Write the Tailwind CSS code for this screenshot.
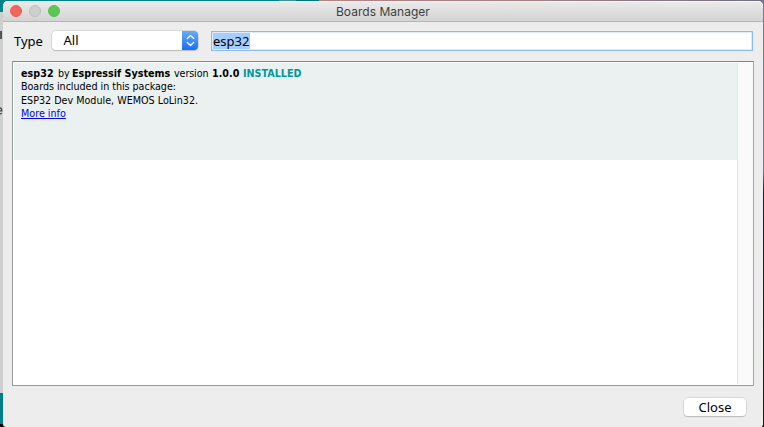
<!DOCTYPE html>
<html lang="en">
<head>
<meta charset="utf-8">
<title>Boards Manager</title>
<script src="https://cdn.jsdelivr.net/npm/@tailwindcss/browser@4"></script>
</head>
<body class="relative h-[427px] w-[764px] overflow-hidden bg-[#cfcfcf] pl-[3px] pt-px font-['Noto_Sans',sans-serif] text-black">
  <!-- Desktop behind the dialog -->
  <div class="absolute left-0 top-0 flex h-[12px] w-full">
    <div class="w-[279px] bg-[#00838a]"></div>
    <div class="w-[17px] bg-[#3a9196]"></div>
    <div class="w-[23px] bg-[#00767c]"></div>
    <div class="flex-1 bg-gradient-to-r from-[#b48380] via-[#a08086] to-[#716f83]"></div>
  </div>
  <div class="absolute right-0 top-0 h-full w-[2px] bg-gradient-to-b from-[#77768a] from-40% via-[#20202c] via-45% to-[#241a14]"></div>
  <div class="absolute left-0 top-[31px] h-[8px] w-[2px] bg-[#4d5759]"></div>
  <svg class="absolute left-0 top-[107px] h-[8px] w-[3px]" viewBox="0 0 3 8" fill="none" stroke="#444" stroke-width="1.2"><path d="M0 .8C1.2 1 1.8 2.2 1.8 3.8H0M0 7 1.8 6.4"/></svg>
  <div class="absolute left-0 top-[393px] h-[31px] w-[4px] bg-[#008085]"></div>
  <div class="absolute left-0 top-[424px] h-[3px] w-[8px] bg-black"></div>

  <div class="relative flex h-[426px] w-[760px] flex-col rounded-t-[5px] rounded-b-[3px] bg-[#ededed]">
    <header class="relative h-[21px] shrink-0 rounded-t-[5px] border-b border-[#b5b5b5] bg-gradient-to-b from-[#ebebeb] to-[#d3d3d3] shadow-[inset_0_1px_0_#f6f6f6]">
      <div class="flex gap-[7px] pl-[7px] pt-[4px]">
        <span class="size-[12px] rounded-full border border-[#e96057] bg-[#f3655b]"></span>
        <span class="size-[12px] rounded-full border border-[#bdbdbd] bg-[#cecece]"></span>
        <span class="size-[12px] rounded-full border border-[#55bf4d] bg-[#5ac752]"></span>
      </div>
      <h1 class="absolute left-[333px] top-[2px] whitespace-nowrap font-['Inter',sans-serif] text-[12px] leading-[18px] tracking-[0.02px] text-[#3f3f3f]">Boards Manager</h1>
    </header>

    <div class="flex h-[39px] shrink-0 items-start pl-[11px] pt-[9px]">
      <label class="w-[38px] text-[13px] leading-[20px]">Type</label>
      <div class="flex h-[19px] w-[146px] overflow-hidden rounded-[4px] bg-white shadow-[0_0_0_0.5px_#c4c4c4,0_1px_1px_#b5b5b5]">
        <span class="flex-1 pl-[11.5px] text-[13px] leading-[18px]">All</span>
        <span class="flex w-[16px] items-center justify-center bg-gradient-to-b from-[#66aafa] to-[#166cfb]">
          <svg class="h-[13px] w-[9px]" viewBox="0 0 9 13" fill="none" stroke="white" stroke-width="1.4" stroke-linecap="round" stroke-linejoin="round"><path d="M1.3 4.6 4.5 1.5 7.7 4.6M1.3 8.4 4.5 11.5 7.7 8.4"/></svg>
        </span>
      </div>
      <div class="ml-[13px] flex h-[20px] w-[542px] items-center border border-[#8dbbe9] bg-white pl-px shadow-[inset_0_0_0_0.5px_#c2daf4]">
        <span class="flex h-[16px] w-[37px] items-center bg-[#a5cdff] text-[13px] leading-[16px]">esp32</span>
      </div>
    </div>

    <main class="ml-[9px] flex h-[325px] w-[742px] shrink-0 border border-l-[#999] border-r-[#a8a8a8] border-t-[#858585] border-b-[#999] bg-white p-px pr-0">
      <div class="flex-1">
        <article class="h-[97px] whitespace-nowrap bg-[#ebf1f1] pl-[7px] pt-[4px] font-['DejaVu_Sans',Verdana,sans-serif] text-[9.6px] leading-[13.3px]">
          <div class="flex">
            <b class="w-[37px] tracking-[0.05px]">esp32</b><span class="w-[14px]">by</span><b class="w-[102px]">Espressif Systems</b><span class="w-[38px] tracking-[-0.1px]">version</span><b class="w-[31px]">1.0.0</b><b class="text-[#00979c]">INSTALLED</b>
          </div>
          <p class="tracking-[-0.04px]">Boards included in this package:</p>
          <p>ESP32 Dev Module, WEMOS LoLin32.</p>
          <a class="text-[#0000ee] underline">More info</a>
        </article>
      </div>
      <div class="w-[16px] border-l border-[#e6e6e6] bg-[#fafafa]"></div>
    </main>

    <footer class="flex justify-end pr-[17px] pt-[12px]">
      <button class="h-[18px] w-[62px] rounded-[4px] bg-white text-[13px] leading-[16px] shadow-[0_0_0_0.5px_#c4c4c4,0_1px_1px_#b5b5b5]">Close</button>
    </footer>
  </div>
</body>
</html>
